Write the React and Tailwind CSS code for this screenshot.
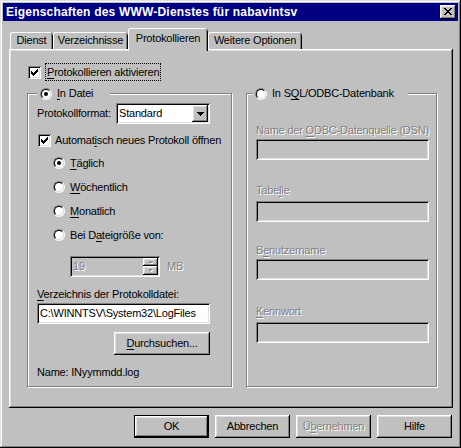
import React from "react";

const RAISED =
  "shadow-[inset_-1px_-1px_0_#000,inset_1px_1px_0_#fff,inset_-2px_-2px_0_#808080,inset_2px_2px_0_#dfdfdf]";
const SUNKEN =
  "shadow-[inset_1px_1px_0_#808080,inset_-1px_-1px_0_#fff,inset_2px_2px_0_#000,inset_-2px_-2px_0_#dfdfdf]";
const FRAME =
  "shadow-[inset_-1px_-1px_0_#000,inset_1px_1px_0_#dfdfdf,inset_-2px_-2px_0_#808080,inset_2px_2px_0_#fff]";
const DIS = "text-[#808080] [text-shadow:1px_1px_0_#fff]";

function U({ children }) {
  return <span className="underline underline-offset-[2px] decoration-1">{children}</span>;
}

function Check({ checked }) {
  return (
    <span className={`w-[13px] h-[13px] shrink-0 bg-white ${SUNKEN} flex items-center justify-center`}>
      {checked && (
        <svg width="7" height="7" viewBox="0 0 7 7" shapeRendering="crispEdges">
          <path
            d="M6 0h1v1H6zM5 1h2v1H5zM0 2h1v1H0zM4 2h3v1H4zM0 3h2v1H0zM3 3h3v1H3zM0 4h5v1H0zM1 5h3v1H1zM2 6h1v1H2z"
            fill="#000"
          />
        </svg>
      )}
    </span>
  );
}

function Radio({ checked }) {
  return (
    <span className="block w-[12px] h-[12px] shrink-0 rounded-full border border-t-[#808080] border-l-[#808080] border-r-white border-b-white">
      <span className="w-full h-full rounded-full border border-t-black border-l-black border-r-[#dfdfdf] border-b-[#dfdfdf] bg-white flex items-center justify-center">
        {checked && <span className="block w-[4px] h-[4px] rounded-full bg-black" />}
      </span>
    </span>
  );
}

function Group({ className, legend, children }) {
  return (
    <div
      className={`relative h-[294px] border border-[#808080] shadow-[inset_1px_1px_0_#fff,1px_1px_0_#fff] flex flex-col pl-[9px] ${className}`}
    >
      {legend}
      {children}
    </div>
  );
}

function Tab({ className, selected, children }) {
  return (
    <div
      className={`flex justify-center rounded-t-[3px] bg-[#c0c0c0] shadow-[inset_1px_0_0_#fff,inset_0_1px_0_#fff,inset_-1px_0_0_#000,inset_-2px_0_0_#808080] ${
        selected ? "relative z-10 h-[23px] -mb-[2px] items-start pt-[4px]" : "h-[17px] items-center"
      } ${className}`}
    >
      <span>{children}</span>
    </div>
  );
}

function ArrowDown() {
  return (
    <svg width="7" height="4" viewBox="0 0 7 4" shapeRendering="crispEdges">
      <path d="M0 0h7v1H0zM1 1h5v1H1zM2 2h3v1H2zM3 3h1v1H3z" fill="#000" />
    </svg>
  );
}

function SpinArrow({ up }) {
  const d = up ? "M2 0h1v1H2zM1 1h3v1H1z" : "M1 0h3v1H1zM2 1h1v1H2z";
  return (
    <svg width="6" height="3" viewBox="0 0 6 3" shapeRendering="crispEdges">
      <g transform="translate(1 1)">
        <path d={d} fill="#fff" />
      </g>
      <path d={d} fill="#808080" />
    </svg>
  );
}

export default function App() {
  return (
    <div
      className={`w-[461px] h-[448px] bg-[#c0c0c0] p-[3px] flex flex-col font-['Liberation_Sans',Arial,sans-serif] text-[11px] leading-[13px] tracking-[-0.2px] text-black ${FRAME}`}
    >
      {/* Title bar */}
      <div className="h-[18px] shrink-0 bg-[#000080] flex items-center justify-between pl-[3px] pr-[2px]">
        <span className="text-white font-bold text-[12px] leading-[14px] tracking-[0.2px]">
          Eigenschaften des WWW-Dienstes für nabavintsv
        </span>
        <div className={`w-[16px] h-[14px] bg-[#c0c0c0] ${RAISED} flex items-start justify-start pl-[4px] pt-[3px]`}>
          <svg width="8" height="7" viewBox="0 0 8 7" shapeRendering="crispEdges">
            <path
              d="M0 0h2v1H0zM6 0h2v1H6zM1 1h2v1H1zM5 1h2v1H5zM2 2h4v1H2zM3 3h2v1H3zM2 4h4v1H2zM1 5h2v1H1zM5 5h2v1H5zM0 6h2v1H0zM6 6h2v1H6z"
              fill="#000"
            />
          </svg>
        </div>
      </div>

      {/* Body */}
      <div className="pl-[6px] pr-[5px] pt-[7px] flex flex-col">
        {/* Tabs */}
        <div className="h-[21px] flex items-end pl-[1px]">
          <Tab className="w-[43px]">Dienst</Tab>
          <Tab className="w-[75px]">Verzeichnisse</Tab>
          <Tab className="w-[80px]" selected>
            Protokollieren
          </Tab>
          <Tab className="w-[94px]">Weitere Optionen</Tab>
        </div>

        {/* Panel */}
        <div className={`h-[359px] bg-[#c0c0c0] ${RAISED} pt-[14px] pl-[18px] flex flex-col`}>
          <div className="h-[18px] flex items-center pl-[1px]">
            <Check checked />
            <div className="ml-[4px] h-[18px] border border-dotted border-black px-[1px] flex items-center">
              <span>
                <U>P</U>rotokollieren aktivieren
              </span>
            </div>
          </div>

          <div className="mt-[12px] flex">
            {/* Left group */}
            <Group
              className="w-[205px]"
              legend={
                <div className="absolute top-[-7px] left-[9px] w-[73px] h-[13px] bg-[#c0c0c0] flex items-center pl-[3px]">
                  <Radio checked />
                  <span className="ml-[5px]">
                    <U>I</U>n Datei
                  </span>
                </div>
              }
            >
              <div className="mt-[9px] h-[21px] flex items-center">
                <span className="w-[79px]">Protokollformat:</span>
                <div className={`w-[94px] h-[21px] bg-white ${SUNKEN} flex items-center justify-between pl-[3px] pr-[2px]`}>
                  <span>Standard</span>
                  <div className={`w-[16px] h-[17px] bg-[#c0c0c0] ${RAISED} flex items-center justify-center`}>
                    <ArrowDown />
                  </div>
                </div>
              </div>

              <div className="mt-[8px] h-[16px] flex items-center pl-[1px]">
                <Check checked />
                <span className="ml-[4px]">
                  Automat<U>i</U>sch neues Protokoll öffnen
                </span>
              </div>

              <div className="mt-[7px] h-[16px] flex items-center pl-[16px]">
                <Radio checked />
                <span className="ml-[5px]">
                  <U>T</U>äglich
                </span>
              </div>
              <div className="mt-[8px] h-[16px] flex items-center pl-[16px]">
                <Radio />
                <span className="ml-[5px]">
                  <U>W</U>öchentlich
                </span>
              </div>
              <div className="mt-[8px] h-[16px] flex items-center pl-[16px]">
                <Radio />
                <span className="ml-[5px]">
                  <U>M</U>onatlich
                </span>
              </div>
              <div className="mt-[8px] h-[16px] flex items-center pl-[16px]">
                <Radio />
                <span className="ml-[5px]">
                  Bei D<U>a</U>teigröße von:
                </span>
              </div>

              <div className="mt-[13px] h-[21px] flex items-center pl-[33px]">
                <div className={`w-[90px] h-[21px] bg-[#c0c0c0] ${SUNKEN} flex items-center justify-between pl-[3px] pr-[2px]`}>
                  <span className={DIS}>19</span>
                  <div className="flex flex-col w-[15px] h-[17px]">
                    <div className={`h-[8px] ${RAISED} flex items-center justify-center`}>
                      <SpinArrow up />
                    </div>
                    <div className={`h-[9px] ${RAISED} flex items-center justify-center`}>
                      <SpinArrow />
                    </div>
                  </div>
                </div>
                <span className={`ml-[7px] ${DIS}`}>MB</span>
              </div>

              <div className="mt-[11px] h-[13px]">
                <U>V</U>erzeichnis der Protokolldatei:
              </div>
              <div className={`mt-[2px] w-[173px] h-[21px] bg-white ${SUNKEN} flex items-center pl-[3px] whitespace-nowrap overflow-hidden`}>
                C:\WINNTSV\System32\LogFiles
              </div>

              <div className={`mt-[8px] ml-[77px] w-[96px] h-[23px] ${RAISED} flex items-center justify-center`}>
                <span>
                  <U>D</U>urchsuchen...
                </span>
              </div>

              <div className="mt-[11px] h-[13px]">Name: INyymmdd.log</div>
            </Group>

            {/* Right group */}
            <Group
              className="ml-[14px] w-[191px]"
              legend={
                <div className="absolute top-[-7px] left-[6px] w-[155px] h-[13px] bg-[#c0c0c0] flex items-center pl-[2px]">
                  <Radio />
                  <span className="ml-[5px]">
                    In S<U>Q</U>L/ODBC-Datenbank
                  </span>
                </div>
              }
            >
              <div className={`mt-[30px] h-[13px] ${DIS}`}>
                Name der <U>O</U>DBC-Datenquelle (DSN)
              </div>
              <div className={`mt-[2px] w-[173px] h-[21px] bg-[#c0c0c0] ${SUNKEN}`} />
              <div className={`mt-[24px] h-[13px] ${DIS}`}>
                Tabe<U>l</U>le
              </div>
              <div className={`mt-[4px] w-[173px] h-[21px] bg-[#c0c0c0] ${SUNKEN}`} />
              <div className={`mt-[22px] h-[13px] ${DIS}`}>
                B<U>e</U>nutzername
              </div>
              <div className={`mt-[2px] w-[173px] h-[21px] bg-[#c0c0c0] ${SUNKEN}`} />
              <div className={`mt-[25px] h-[13px] ${DIS}`}>
                <U>K</U>ennwort
              </div>
              <div className={`mt-[4px] w-[173px] h-[21px] bg-[#c0c0c0] ${SUNKEN}`} />
            </Group>
          </div>
        </div>
      </div>

      {/* Buttons */}
      <div className="mt-[7px] flex justify-end gap-[6px] pr-[6px]">
        <div className="w-[75px] h-[23px] border border-black">
          <div className={`w-full h-full ${RAISED} flex items-center justify-center`}>OK</div>
        </div>
        <div className={`w-[75px] h-[23px] ${RAISED} flex items-center justify-center`}>Abbrechen</div>
        <div className={`w-[75px] h-[23px] ${RAISED} flex items-center justify-center`}>
          <span className={DIS}>
            Ü<U>b</U>ernehmen
          </span>
        </div>
        <div className={`w-[75px] h-[23px] ${RAISED} flex items-center justify-center`}>Hilfe</div>
      </div>
    </div>
  );
}
